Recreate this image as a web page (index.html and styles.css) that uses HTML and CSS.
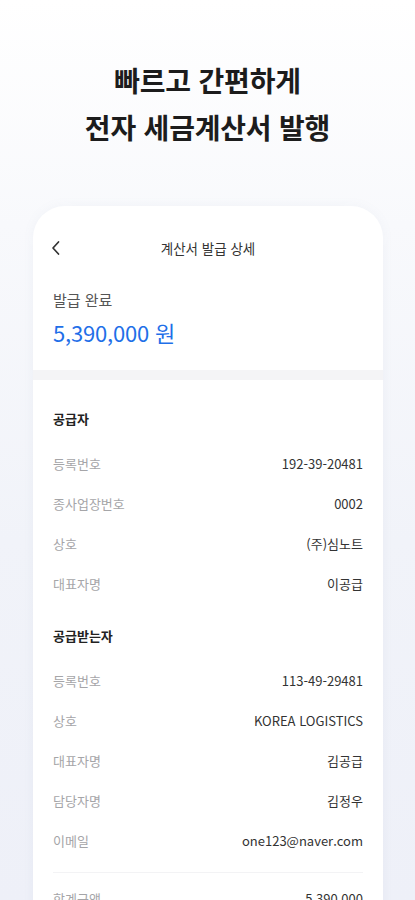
FILE: index.html
```html
<!DOCTYPE html>
<html lang="ko">
<head>
    <meta charset="UTF-8">
    <meta name="viewport" content="width=device-width, initial-scale=1.0">
    <title>전자 세금계산서 발행</title>
    <link rel="stylesheet" href="styles.css">
</head>
<body>
    <div class="hero">
        <h1>빠르고 간편하게<br>전자 세금계산서 발행</h1>
    </div>

    <div class="card">
        <div class="card-header">
            <svg class="back" width="10" height="16" viewBox="0 0 10 16">
                <polyline points="7.5,2 2,8 7.5,14" fill="none" stroke="#333" stroke-width="1.7" stroke-linecap="round" stroke-linejoin="round"/>
            </svg>
            <span class="card-title">계산서 발급 상세</span>
        </div>

        <div class="summary">
            <p class="status">발급 완료</p>
            <p class="amount">5,390,000 원</p>
        </div>

        <div class="band"></div>

        <div class="section">
            <h3>공급자</h3>
            <div class="row"><span class="label">등록번호</span><span class="value">192-39-20481</span></div>
            <div class="row"><span class="label">종사업장번호</span><span class="value">0002</span></div>
            <div class="row"><span class="label">상호</span><span class="value">(주)심노트</span></div>
            <div class="row"><span class="label">대표자명</span><span class="value">이공급</span></div>
        </div>

        <div class="section second">
            <h3>공급받는자</h3>
            <div class="row"><span class="label">등록번호</span><span class="value">113-49-29481</span></div>
            <div class="row"><span class="label">상호</span><span class="value">KOREA LOGISTICS</span></div>
            <div class="row"><span class="label">대표자명</span><span class="value">김공급</span></div>
            <div class="row"><span class="label">담당자명</span><span class="value">김정우</span></div>
            <div class="row"><span class="label">이메일</span><span class="value">one123@naver.com</span></div>
        </div>

        <div class="section total">
            <div class="row"><span class="label">합계금액</span><span class="value">5,390,000</span></div>
        </div>
    </div>
</body>
</html>
```

FILE: styles.css
```css
:root {
    --text-dark: #222;
    --text-value: #333;
    --text-muted: #a5a5a8;
    --blue: #1f6fe8;
    --band: #f4f4f6;
}

* {
    margin: 0;
    padding: 0;
    box-sizing: border-box;
    font-family: "Noto Sans CJK KR", "Noto Sans", sans-serif;
}

html, body {
    height: 100%;
    overflow: hidden;
}

body {
    background: linear-gradient(180deg, #ffffff 0%, #f8f9fc 25%, #f1f3f9 60%, #eef0f8 100%);
    color: var(--text-dark);
}

.hero {
    padding-top: 57px;
    text-align: center;
}

.hero h1 {
    font-size: 28px;
    font-weight: 700;
    line-height: 47px;
    color: #1c1c1c;
    letter-spacing: -0.2px;
}

.card {
    margin: 55px 0 0 33px;
    width: 350px;
    min-height: 700px;
    background: #fff;
    border-radius: 32px 32px 0 0;
    box-shadow: 0 0 12px rgba(120, 130, 170, 0.06);
}

.card-header {
    position: relative;
    padding-top: 32px;
    text-align: center;
}

.card-title {
    font-size: 13.5px;
    line-height: 20px;
    color: #333;
    display: block;
}

.back {
    position: absolute;
    left: 18px;
    top: 34px;
}

.summary {
    padding: 31px 20px 22px;
}

.status {
    font-size: 15px;
    line-height: 22px;
    color: #555;
}

.amount {
    margin-top: 5px;
    font-size: 22px;
    line-height: 32px;
    color: var(--blue);
    font-weight: 400;
    letter-spacing: -0.2px;
}

.band {
    height: 10px;
    background: var(--band);
}

.section {
    padding: 29px 20px 0;
}

.section.second {
    padding-top: 23px;
}

.section h3 {
    font-size: 13px;
    line-height: 20px;
    font-weight: 700;
    margin-bottom: 14px;
}

.row {
    display: flex;
    justify-content: space-between;
    align-items: center;
    height: 40px;
    font-size: 13px;
}

.label {
    color: var(--text-muted);
}

.value {
    color: var(--text-value);
}

.section.total {
    margin: 12px 20px 0;
    padding: 5px 0 0;
    border-top: 1px solid #f3f3f5;
}
```
